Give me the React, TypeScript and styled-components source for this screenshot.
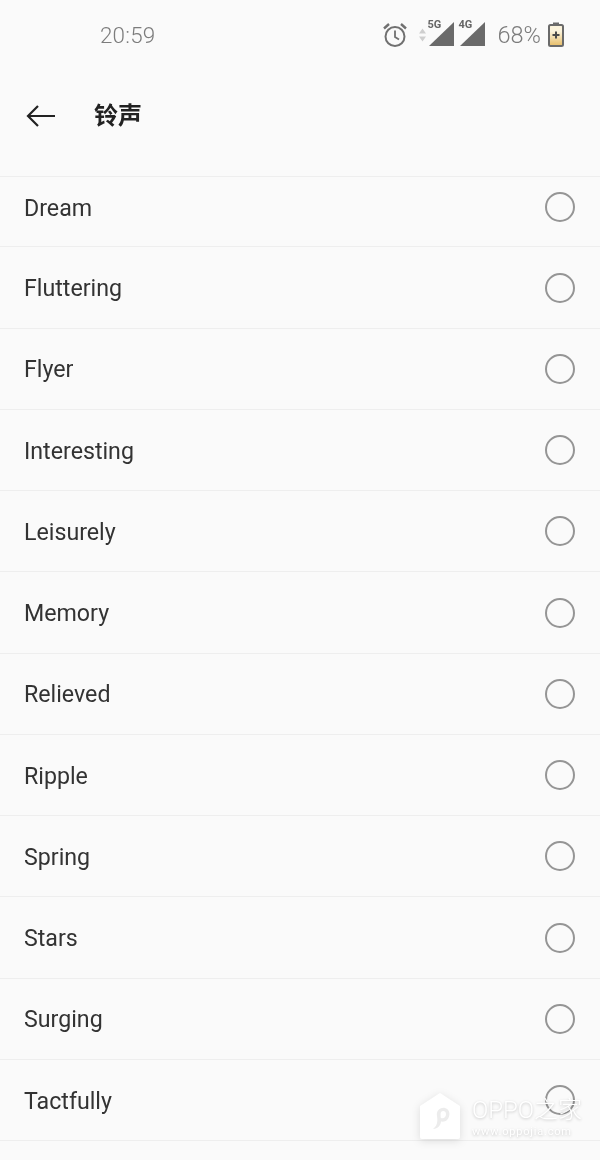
import React, { FC } from "react";
import styled, { createGlobalStyle } from "styled-components";

const GlobalStyle = createGlobalStyle`
  html, body {
    margin: 0;
    padding: 0;
    background: #fafafa;
  }
  body {
    font-family: Roboto, "Noto Sans CJK SC", sans-serif;
  }
`;

const Screen = styled.div`
  position: relative;
  width: 600px;
  height: 1160px;
  overflow: hidden;
  background: #fafafa;
  filter: blur(0.4px);
`;

const StatusBar = styled.div`
  height: 66px;
  box-sizing: border-box;
  padding: 3px 36px 0 100px;
  display: flex;
  align-items: center;
  justify-content: space-between;
  color: #7c7c7c;
`;

const Clock = styled.span`
  font-size: 22.4px;
  font-weight: 300;
  letter-spacing: 0.2px;
`;

const StatusIcons = styled.div`
  display: flex;
  align-items: center;
`;

const ArrowsSlot = styled.span`
  display: flex;
  margin: 0 3px 0 11px;
`;

const Signal = styled.div`
  position: relative;
  width: 25px;
  height: 26px;
  & + & {
    margin-left: 6px;
  }
`;

const SignalLabel = styled.span`
  position: absolute;
  left: -1px;
  top: -4px;
  font-size: 11px;
  font-weight: 700;
  color: #666;
`;

const BatteryText = styled.span`
  font-size: 23.5px;
  font-weight: 300;
  margin: 0 7px 0 13px;
`;

const Header = styled.header`
  height: 109.6px;
  box-sizing: border-box;
  padding: 0 0 12px 26px;
  display: flex;
  align-items: center;
  gap: 38px;
`;

const BackArrowSvg = styled.svg`
  margin-top: 2px;
`;

const Title = styled.h1`
  margin: 0 0 2px;
  font-family: "Noto Sans CJK SC", sans-serif;
  font-size: 24px;
  font-weight: 700;
  color: #222;
`;

const List = styled.ul`
  margin: 0;
  padding: 0;
  list-style: none;
  border-top: 1px solid #eeeeee;
`;

const Row = styled.li<{ $cut?: boolean }>`
  height: ${({ $cut }) => ($cut ? "70.8px" : "81.25px")};
  box-sizing: border-box;
  padding: ${({ $cut }) => ($cut ? "0 25px 9px 24px" : "0 25px 0 24px")};
  display: flex;
  align-items: center;
  justify-content: space-between;
  border-bottom: 1px solid #eeeeee;
`;

const RowLabel = styled.span`
  margin-top: 1.4px;
  font-size: 23.2px;
  color: #333;
`;

const Radio = styled.span`
  width: 30px;
  height: 30px;
  box-sizing: border-box;
  border: 2px solid #959595;
  border-radius: 50%;
`;

const Watermark = styled.div`
  position: absolute;
  left: 419px;
  top: 1092px;
  display: flex;
  gap: 11px;
  color: #fff;
  text-shadow: 0 1px 3px rgba(0, 0, 0, 0.22);
  pointer-events: none;
`;

const LogoSlot = styled.span`
  display: flex;
  filter: drop-shadow(0 2px 4px rgba(0, 0, 0, 0.12));
`;

const WatermarkText = styled.div`
  display: flex;
  flex-direction: column;
  padding-top: 3px;
`;

const WatermarkName = styled.span`
  font-size: 24px;
  font-weight: 300;
  line-height: 30px;
  white-space: nowrap;
`;

const WatermarkSite = styled.span`
  font-size: 11px;
  line-height: 14px;
  letter-spacing: 0.8px;
  white-space: nowrap;
`;

const AlarmIcon: FC = () => (
  <svg width="26" height="26" viewBox="0 0 26 26" fill="none" stroke="#707070" strokeWidth="2">
    <circle cx="13" cy="14.5" r="9.5" />
    <path d="M13 8.5v6.5l4 2.5" strokeWidth="1.8" />
    <path d="M2 6.5 7 2M24 6.5 19 2" strokeWidth="2.4" />
  </svg>
);

const DataArrows: FC = () => (
  <svg width="7" height="14" viewBox="0 0 7 14" fill="#cfcfcf">
    <path d="M3.5 0.5 7 5.5H0zM3.5 13.5 0 8.5h7z" />
  </svg>
);

const SignalIcon: FC<{ label: string }> = ({ label }) => (
  <Signal>
    <SignalLabel>{label}</SignalLabel>
    <svg width="25" height="26" viewBox="0 0 25 26" fill="#6a6a6a">
      <path d="M0 24 25 0v24z" />
    </svg>
  </Signal>
);

const BatteryIcon: FC = () => (
  <svg width="16" height="25" viewBox="0 0 16 25">
    <defs>
      <linearGradient id="batteryFill" x1="0" y1="0" x2="0" y2="1">
        <stop offset="0.3" stopColor="#fbf3dc" />
        <stop offset="1" stopColor="#e6bc66" />
      </linearGradient>
    </defs>
    <rect x="5" y="0.5" width="6" height="3" fill="#6a6a6a" />
    <rect x="1" y="3" width="14" height="21" rx="1.5" fill="url(#batteryFill)" stroke="#6a6a6a" strokeWidth="2" />
    <path d="M8 9.5v7M4.5 13h7" stroke="#4a4a4a" strokeWidth="2" />
  </svg>
);

const BackArrow: FC = () => (
  <BackArrowSvg width="30" height="24" viewBox="0 0 30 24" fill="none" stroke="#222" strokeWidth="2.2">
    <path d="M29 12H2M12 2 2 12l10 10" />
  </BackArrowSvg>
);

const HouseLogo: FC = () => (
  <svg width="42" height="48" viewBox="0 0 42 48">
    <path d="M21 1 41 14v31a2 2 0 0 1-2 2H3a2 2 0 0 1-2-2V14z" fill="#fff" />
    <path
      d="M14 37c4-3 5-7 4-13-1-5 3-9 8-8 5 1 6 8 2 12-2 2-5 2-7 1l1-3c3 1 5-1 5-4s-3-4-5-2c-1 2 0 6 0 9 0 4-3 8-8 8z"
      fill="#ececec"
    />
  </svg>
);

const RINGTONES = [
  "Dream",
  "Fluttering",
  "Flyer",
  "Interesting",
  "Leisurely",
  "Memory",
  "Relieved",
  "Ripple",
  "Spring",
  "Stars",
  "Surging",
  "Tactfully",
];

export default function App() {
  return (
    <Screen>
      <GlobalStyle />

      <StatusBar>
        <Clock>20:59</Clock>
        <StatusIcons>
          <AlarmIcon />
          <ArrowsSlot>
            <DataArrows />
          </ArrowsSlot>
          <SignalIcon label="5G" />
          <SignalIcon label="4G" />
          <BatteryText>68%</BatteryText>
          <BatteryIcon />
        </StatusIcons>
      </StatusBar>

      <Header>
        <BackArrow />
        <Title>铃声</Title>
      </Header>

      <List>
        {RINGTONES.map((name, i) => (
          <Row key={name} $cut={i === 0}>
            <RowLabel>{name}</RowLabel>
            <Radio />
          </Row>
        ))}
      </List>

      {/* site stamp over the bottom right corner */}
      <Watermark>
        <LogoSlot>
          <HouseLogo />
        </LogoSlot>
        <WatermarkText>
          <WatermarkName>OPPO之家</WatermarkName>
          <WatermarkSite>www.oppojia.com</WatermarkSite>
        </WatermarkText>
      </Watermark>
    </Screen>
  );
}
